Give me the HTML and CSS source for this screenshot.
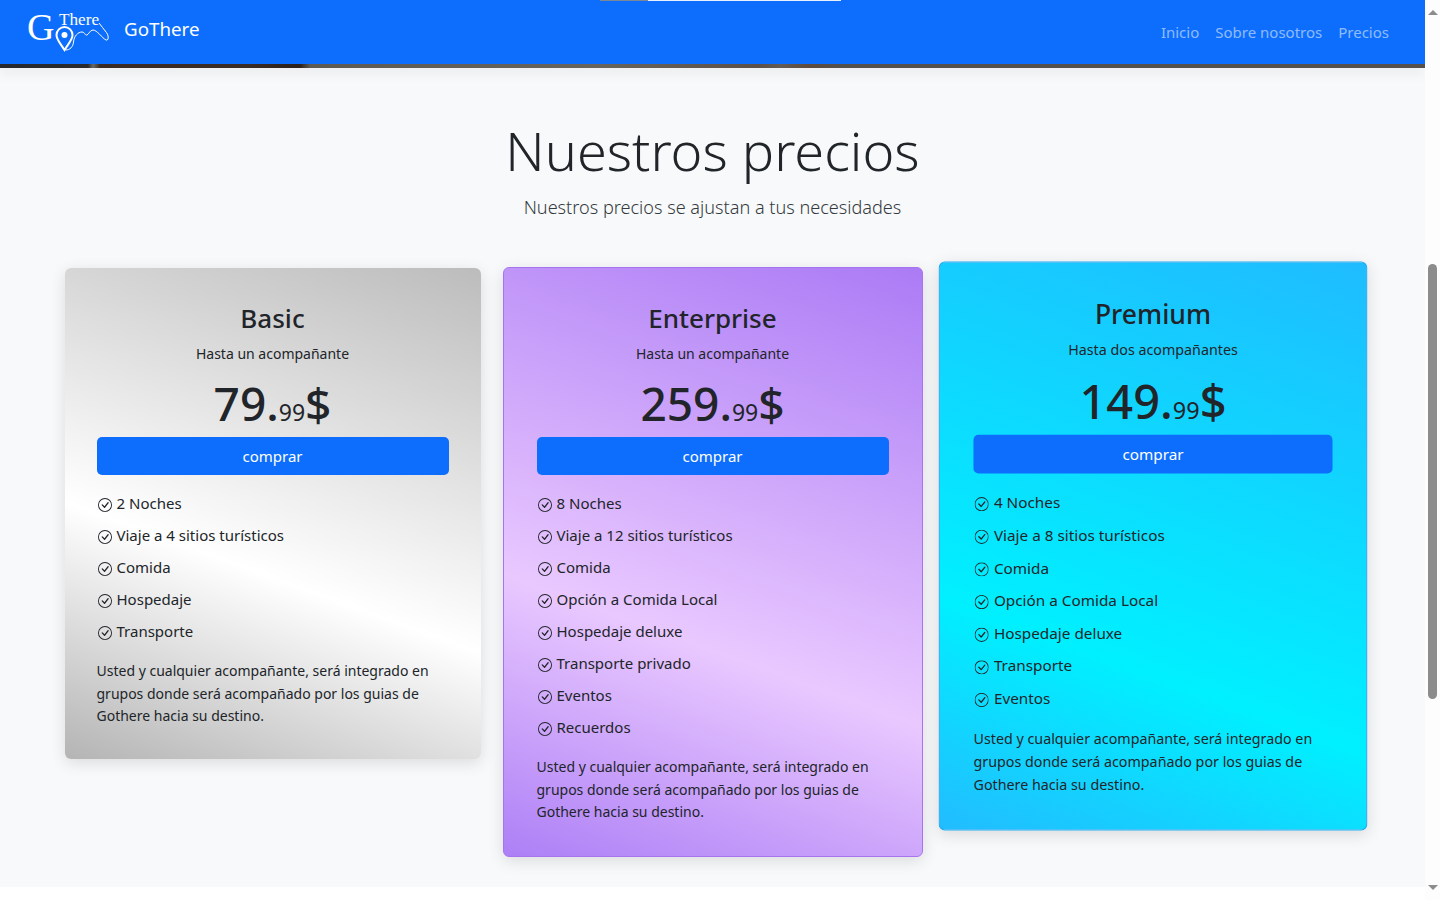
FILE: index.html

```html
<!DOCTYPE html>
<html lang="es">
<head>
  <meta charset="UTF-8">
  <title>GoThere - Precios</title>
  <link rel="stylesheet" href="styles.css">
</head>
<body>
  <svg class="iconos">
    <symbol id="check" viewBox="0 0 16 16">
      <path d="M8 15A7 7 0 1 1 8 1a7 7 0 0 1 0 14zm0 1A8 8 0 1 0 8 0a8 8 0 0 0 0 16z"/>
      <path d="M10.97 4.97a.235.235 0 0 0-.02.022L7.477 9.417 5.384 7.323a.75.75 0 0 0-1.06 1.06L6.97 11.03a.75.75 0 0 0 1.079-.02l3.992-4.99a.75.75 0 0 0-1.071-1.05z"/>
    </symbol>
  </svg>

  <div class="pagina">
    <nav class="navbar">
      <div class="marca">
        <div class="logo">
          <span class="logo-g">G</span>
          <span class="logo-there">There</span>
          <svg class="logo-pin" width="84" height="46" viewBox="0 0 84 46" fill="none">
            <path d="M36.5 44 C33 38 28.5 34 28.5 29 A8 8 0 0 1 44.5 29 C44.5 34 40 38 36.5 44 Z" stroke="#fff" stroke-width="2"/>
            <circle cx="36.5" cy="29" r="3" fill="#fff"/>
            <path d="M37.5 44 C42 44 45 41 45.5 36 C46 30 50 26 54 26 C57 26 57 30 59 29 C61 28 62 24 65 24 C69 24 74 32 78 34 C81 35 81 29 78 26 C76 23 73 20 71 17" stroke="#fff" stroke-width="1"/>
          </svg>
        </div>
        <span class="marca-texto">GoThere</span>
      </div>
      <ul class="menu">
        <li><a href="#">Inicio</a></li>
        <li><a href="#">Sobre nosotros</a></li>
        <li><a href="#">Precios</a></li>
      </ul>
      <div class="tira-superior"><span></span></div>
    </nav>
    <div class="franja"></div>

    <main class="precios">
      <h1>Nuestros precios</h1>
      <p class="lead">Nuestros precios se ajustan a tus necesidades</p>

      <div class="planes">
        <div class="col">
          <div class="card basic">
            <h3>Basic</h3>
            <p class="sub">Hasta un acompañante</p>
            <div class="precio">79<small>.<span>99</span></small>$</div>
            <button>comprar</button>
            <ul class="lista">
              <li><svg class="check"><use href="#check"/></svg>2 Noches</li>
              <li><svg class="check"><use href="#check"/></svg>Viaje a 4 sitios turísticos</li>
              <li><svg class="check"><use href="#check"/></svg>Comida</li>
              <li><svg class="check"><use href="#check"/></svg>Hospedaje</li>
              <li><svg class="check"><use href="#check"/></svg>Transporte</li>
            </ul>
            <p class="nota">Usted y cualquier acompañante, será integrado en grupos donde será acompañado por los guias de Gothere hacia su destino.</p>
          </div>
        </div>

        <div class="col">
          <div class="card enterprise">
            <h3>Enterprise</h3>
            <p class="sub">Hasta un acompañante</p>
            <div class="precio">259<small>.<span>99</span></small>$</div>
            <button>comprar</button>
            <ul class="lista">
              <li><svg class="check"><use href="#check"/></svg>8 Noches</li>
              <li><svg class="check"><use href="#check"/></svg>Viaje a 12 sitios turísticos</li>
              <li><svg class="check"><use href="#check"/></svg>Comida</li>
              <li><svg class="check"><use href="#check"/></svg>Opción a Comida Local</li>
              <li><svg class="check"><use href="#check"/></svg>Hospedaje deluxe</li>
              <li><svg class="check"><use href="#check"/></svg>Transporte privado</li>
              <li><svg class="check"><use href="#check"/></svg>Eventos</li>
              <li><svg class="check"><use href="#check"/></svg>Recuerdos</li>
            </ul>
            <p class="nota">Usted y cualquier acompañante, será integrado en grupos donde será acompañado por los guias de Gothere hacia su destino.</p>
          </div>
        </div>

        <div class="col">
          <div class="card premium">
            <h3>Premium</h3>
            <p class="sub">Hasta dos acompañantes</p>
            <div class="precio">149<small>.<span>99</span></small>$</div>
            <button>comprar</button>
            <ul class="lista">
              <li><svg class="check"><use href="#check"/></svg>4 Noches</li>
              <li><svg class="check"><use href="#check"/></svg>Viaje a 8 sitios turísticos</li>
              <li><svg class="check"><use href="#check"/></svg>Comida</li>
              <li><svg class="check"><use href="#check"/></svg>Opción a Comida Local</li>
              <li><svg class="check"><use href="#check"/></svg>Hospedaje deluxe</li>
              <li><svg class="check"><use href="#check"/></svg>Transporte</li>
              <li><svg class="check"><use href="#check"/></svg>Eventos</li>
            </ul>
            <p class="nota">Usted y cualquier acompañante, será integrado en grupos donde será acompañado por los guias de Gothere hacia su destino.</p>
          </div>
        </div>
      </div>
    </main>
  </div>

  <div class="scrollbar">
    <span class="flecha-up"></span>
    <div class="riel"><div class="thumb"></div></div>
    <span class="flecha-down"></span>
  </div>
</body>
</html>
```

FILE: styles.css

```css
* {
  box-sizing: border-box;
}
html, body {
  height: 100%;
}
body {
  margin: 0;
  display: flex;
  overflow: hidden;
  background-color: #fff;
  color: #212529;
  font-family: "Noto Sans", "Open Sans", sans-serif;
}
.iconos {
  display: none;
}
.pagina {
  width: 1425px;
  height: 887px;
  background-color: #f8f9fa;
  overflow: hidden;
}

/* navbar */
.navbar {
  position: relative;
  height: 64px;
  display: flex;
  align-items: center;
  justify-content: space-between;
  padding: 0 36px 8px 28px;
  background-color: #0d6efd;
}
.marca {
  display: flex;
  align-items: center;
  gap: 16px;
}
.logo {
  position: relative;
  width: 80px;
  height: 44px;
  color: #fff;
  font-family: "Liberation Serif", serif;
}
.logo-g {
  position: absolute;
  left: -1px;
  top: 1px;
  font-size: 38px;
  line-height: 40px;
}
.logo-there {
  position: absolute;
  left: 31px;
  top: 4px;
  font-size: 17.2px;
  line-height: 20px;
}
.logo-pin {
  position: absolute;
  left: 0;
  top: 0;
}
.marca-texto {
  color: #fff;
  font-size: 18.75px;
}
.menu {
  display: flex;
  gap: 16px;
  margin: 8px 0 0;
  padding: 0;
  list-style: none;
}
.menu a {
  color: rgba(255, 255, 255, 0.55);
  font-size: 15px;
  text-decoration: none;
}
.tira-superior {
  position: absolute;
  left: 600px;
  top: 0;
  width: 241px;
  height: 1px;
  background-color: #e8f0ff;
}
.tira-superior span {
  display: block;
  width: 48px;
  height: 1px;
  background-color: #7d8694;
}
.franja {
  height: 4px;
  background: linear-gradient(90deg, #26282c 0, #2a2a2c 88px, #6a6a68 93px, #3a2a22 100px, #3a2b24 250px, #2c2018 300px, #5c5a52 310px, #66645c 600px, #5c5048 760px, #625c56 780px, #5e4a3c 810px, #54504c 840px, #55504c 1425px);
  box-shadow: 0 4px 12px rgba(0, 0, 0, 0.12);
}

/* titulo */
.precios {
  padding-top: 50px;
  text-align: center;
}
h1 {
  margin: 0;
  font-size: 54px;
  font-weight: 300;
  line-height: 65px;
}
.lead {
  margin: 12px 0 0;
  color: #343a40;
  font-size: 18.1px;
  font-weight: 300;
  line-height: 25px;
}

/* tarjetas */
.planes {
  width: 1320px;
  margin: 48px auto 0;
  display: grid;
  grid-template-columns: repeat(3, 1fr);
}
.col {
  padding: 0 12px;
}
.card {
  padding: 31px 32px;
  border-radius: 6px;
  text-align: center;
  box-shadow: 0 4px 16px rgba(0, 0, 0, 0.12);
}
.basic {
  background: linear-gradient(200deg, #bcbcbc 0, #fff 60%, #b4b4b4 100%);
}
.enterprise,
.premium {
  margin: -1px -2px 0;
  padding: 31px 33px 32px;
}
.enterprise {
  border: 1px solid #a873f0;
  background: linear-gradient(200deg, #ab7bf5 0, #e9c8ff 62%, #ad7ff6 100%);
}
.premium {
  border: 1px solid #1ea5f0;
  transform: scale(1.02);
  background: linear-gradient(200deg, #1fbcff 0, #00f0ff 68%, #22bcff 100%);
}
h3 {
  margin: 0;
  font-size: 26px;
  font-weight: 500;
  line-height: 38px;
}
.sub {
  margin: 6px 0 0;
  font-size: 14px;
  line-height: 22px;
}
.precio {
  margin-top: 4px;
  font-size: 46px;
  font-weight: 500;
  line-height: 68px;
}
.precio small {
  font-size: 46px;
  line-height: 0;
}
.precio small span {
  font-size: 23px;
  font-weight: 400;
  line-height: 0;
}
button {
  display: block;
  width: 100%;
  height: 38px;
  padding: 0;
  border: none;
  border-radius: 5px;
  background-color: #0d6efd;
  color: #fff;
  font-family: inherit;
  font-size: 15px;
  cursor: pointer;
}
.lista {
  margin: 12px 0 0;
  padding: 0;
  list-style: none;
  text-align: left;
}
.lista li {
  height: 32px;
  display: flex;
  align-items: center;
  gap: 5px;
  font-size: 15px;
}
.check {
  width: 14px;
  height: 14px;
  margin: 4px 0 0 1px;
  fill: #212529;
}
.nota {
  margin: 13px 0 0;
  font-size: 14px;
  line-height: 22.5px;
  text-align: left;
}

/* barra de scroll */
.scrollbar {
  width: 15px;
  height: 900px;
  display: flex;
  flex-direction: column;
  align-items: center;
  background-color: #fdfdfd;
}
.flecha-up,
.flecha-down {
  width: 0;
  height: 0;
  border-left: 5px solid transparent;
  border-right: 5px solid transparent;
}
.flecha-up {
  margin-top: 10px;
  border-bottom: 5px solid #8c8c8c;
}
.flecha-down {
  margin-bottom: 10px;
  border-top: 5px solid #8c8c8c;
}
.riel {
  flex: 1;
  width: 100%;
  display: flex;
  justify-content: center;
  padding-top: 249px;
}
.thumb {
  width: 9px;
  height: 435px;
  border-radius: 5px;
  background-color: #8c8c8c;
}
```
